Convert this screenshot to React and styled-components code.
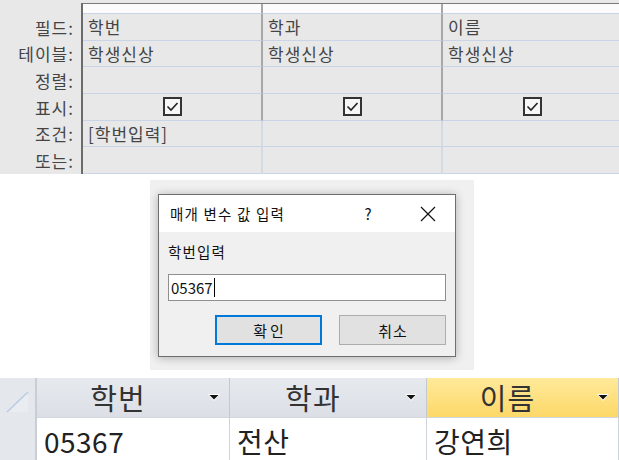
import React from 'react';
import styled, { createGlobalStyle } from 'styled-components';

const Global = createGlobalStyle`
  html, body { margin: 0; padding: 0; background: #fff; }
  body {
    width: 619px; height: 460px; overflow: hidden;
    font-family: "Noto Sans CJK KR", "Noto Sans", sans-serif;
  }
  * { box-sizing: border-box; }
`;

const Page = styled.div`
  width: 619px;
  height: 460px;
  overflow: hidden;
  display: flex;
  flex-direction: column;
  background: #fff;
`;

/* ---------- Query design grid ---------- */
const QueryGrid = styled.section`
  display: flex;
  height: 174px;
  flex-shrink: 0;
  background: #e8e8e8;
  padding-top: 3px;
  overflow: hidden;
`;

const LabelCol = styled.div`
  width: 81px;
  flex-shrink: 0;
  display: flex;
  flex-direction: column;
  padding-top: 11px;
`;

const Label = styled.div`
  height: 26.67px;
  display: flex;
  align-items: center;
  justify-content: flex-end;
  padding-right: 7px;
  font-size: 17px;
  letter-spacing: 1px;
  color: #444;
  white-space: nowrap;
`;

const Design = styled.div`
  flex-shrink: 0;
  border-left: 2px solid #6b6b6b;
  border-top: 1px solid #7a7a7a;
  display: grid;
  grid-template-columns: repeat(3, 180px);
  grid-template-rows: 10px repeat(6, 26.67px);
`;

const Cell = styled.div`
  border-right: 2px solid ${p => (p.$lower ? '#d3dae4' : '#a7a7a7')};
  border-bottom: 1px solid #c9d5e7;
  background: ${p => (p.$strip ? '#fbfbfb' : '#e8e8e8')};
  display: flex;
  align-items: center;
  justify-content: ${p => (p.$center ? 'center' : 'flex-start')};
  padding-left: ${p => (p.$center ? '0' : '5px')};
  font-size: 17px;
  letter-spacing: 1px;
  color: #444;
  white-space: nowrap;
  overflow: hidden;
`;

const Box = styled.span`
  width: 19px;
  height: 19px;
  border: 2px solid #333;
  background: #f7f7f7;
  display: flex;
  align-items: center;
  justify-content: center;
`;

const CheckBox = () => (
  <Box>
    <svg width="13" height="11" viewBox="0 0 13 11">
      <polyline points="1.5,5.5 5,9 11.5,2" fill="none" stroke="#222" strokeWidth="1.6" />
    </svg>
  </Box>
);

/* ---------- Parameter dialog ---------- */
const ShotArea = styled.div`
  margin: 6px 0 0 150px;
  width: 324px;
  height: 190px;
  flex-shrink: 0;
  background: #f0f0f0;
  padding: 14px 17px 13px 8px;
`;

const Dialog = styled.div`
  width: 298px;
  height: 163px;
  border: 1px solid #6e6e6e;
  box-shadow: 0 1px 9px rgba(0, 0, 0, 0.28);
  display: flex;
  flex-direction: column;
  background: #f0f0f0;
`;

const TitleBar = styled.div`
  height: 37px;
  background: #fff;
  display: flex;
  align-items: center;
  padding-left: 11px;
`;

const Title = styled.div`
  flex: 1;
  font-size: 14.5px;
  letter-spacing: 1.2px;
  color: #111;
`;

const HelpBtn = styled.div`
  width: 30px;
  margin-right: 18px;
  text-align: center;
  font-size: 15px;
  color: #111;
`;

const CloseBtn = styled.div`
  width: 54px;
  height: 100%;
  display: flex;
  align-items: center;
  justify-content: center;
`;

const Body = styled.div`
  flex: 1;
  padding: 10px 9px 0 9px;
  display: flex;
  flex-direction: column;
`;

const PromptLabel = styled.div`
  height: 20px;
  line-height: 20px;
  font-size: 14.5px;
  letter-spacing: 1.2px;
  color: #111;
`;

const Input = styled.div`
  margin-top: 12px;
  width: 278px;
  height: 27px;
  border: 1px solid #8f8f8f;
  background: #fff;
  display: flex;
  align-items: center;
  padding-left: 2px;
  font-size: 15px;
  color: #111;
`;

const Caret = styled.span`
  display: inline-block;
  width: 1px;
  height: 19px;
  background: #000;
  margin-left: 1px;
`;

const ButtonRow = styled.div`
  margin-top: 14px;
  width: 278px;
  display: flex;
  justify-content: flex-end;
  gap: 17px;
`;

const Button = styled.div`
  width: 107px;
  height: 30px;
  background: #e1e1e1;
  border: ${p => (p.$default ? '2px solid #0078d7' : '1px solid #adadad')};
  display: flex;
  align-items: center;
  justify-content: center;
  font-size: 15px;
  letter-spacing: ${p => (p.$default ? '3px' : '1px')};
  padding-left: ${p => (p.$default ? '3px' : '1px')};
  color: #111;
`;

/* ---------- Datasheet ---------- */
const Sheet = styled.div`
  margin-top: 8px;
  display: grid;
  grid-template-columns: 37px 193px 197px 192px;
  grid-template-rows: 40px 42px;
`;

const Corner = styled.div`
  grid-row: 1 / span 2;
  background: #e4e7ec;
  border-right: 2px solid #c9cdd4;
  padding: 13px 0 0 6px;
`;

const Header = styled.div`
  background: ${p =>
    p.$active
      ? 'linear-gradient(#ffe99a, #fdd868)'
      : 'linear-gradient(#e6e9ee, #dcdfe5)'};
  border-right: 1px solid #c4c8cf;
  border-bottom: 1px solid #d3d7de;
  display: flex;
  align-items: center;
`;

const HeaderText = styled.div`
  flex: 1;
  text-align: center;
  font-size: 29px;
  letter-spacing: 1px;
  color: #333;
  line-height: 1;
`;

const Arrow = styled.div`
  width: 30px;
  display: flex;
  justify-content: center;
`;

const DataCell = styled.div`
  background: #fff;
  border-right: 1px solid #cfd3da;
  padding: 9px 0 0 7px;
  font-size: 28px;
  letter-spacing: 0.5px;
  line-height: 1;
  color: #222;
  white-space: nowrap;
  overflow: hidden;
`;

const DropArrow = () => (
  <svg width="14" height="9" viewBox="0 0 14 9">
    <polygon points="1,1 13,1 7,8" fill="#fff" />
    <polygon points="2.5,2 11.5,2 7,6.5" fill="#111" />
  </svg>
);

const fields = [
  { name: '학번', table: '학생신상', criteria: '[학번입력]' },
  { name: '학과', table: '학생신상', criteria: '' },
  { name: '이름', table: '학생신상', criteria: '' },
];

const labels = ['필드:', '테이블:', '정렬:', '표시:', '조건:', '또는:'];

export default function App() {
  const rows = [
    f => f.name,
    f => f.table,
    () => '',
    () => <CheckBox />,
    f => f.criteria,
    () => '',
  ];
  return (
    <Page>
      <Global />
      <QueryGrid>
        <LabelCol>
          {labels.map(l => (
            <Label key={l}>{l}</Label>
          ))}
        </LabelCol>
        <Design>
          {fields.map(f => (
            <Cell key={'s' + f.name} $strip />
          ))}
          {rows.map((r, ri) =>
            fields.map(f => (
              <Cell key={ri + f.name} $lower={ri >= 4} $center={ri === 3}>
                {r(f)}
              </Cell>
            ))
          )}
        </Design>
      </QueryGrid>

      <ShotArea>
        <Dialog>
          <TitleBar>
            <Title>매개 변수 값 입력</Title>
            <HelpBtn>?</HelpBtn>
            <CloseBtn>
              <svg width="16" height="16" viewBox="0 0 16 16">
                <path d="M1 1 L15 15 M15 1 L1 15" stroke="#111" strokeWidth="1.2" fill="none" />
              </svg>
            </CloseBtn>
          </TitleBar>
          <Body>
            <PromptLabel>학번입력</PromptLabel>
            <Input>
              05367
              <Caret />
            </Input>
            <ButtonRow>
              <Button $default>확인</Button>
              <Button>취소</Button>
            </ButtonRow>
          </Body>
        </Dialog>
      </ShotArea>

      <Sheet>
        <Corner>
          <svg width="24" height="22" viewBox="0 0 24 22">
            <polygon points="1,21 22,1 22,21" fill="#e9ecf0" />
            <line x1="1" y1="21" x2="22" y2="1" stroke="#b9cbe2" strokeWidth="1.5" />
          </svg>
        </Corner>
        {fields.map(f => (
          <Header key={'h' + f.name} $active={f.name === '이름'}>
            <HeaderText>{f.name}</HeaderText>
            <Arrow>
              <DropArrow />
            </Arrow>
          </Header>
        ))}
        <DataCell>05367</DataCell>
        <DataCell>전산</DataCell>
        <DataCell>강연희</DataCell>
      </Sheet>
    </Page>
  );
}
